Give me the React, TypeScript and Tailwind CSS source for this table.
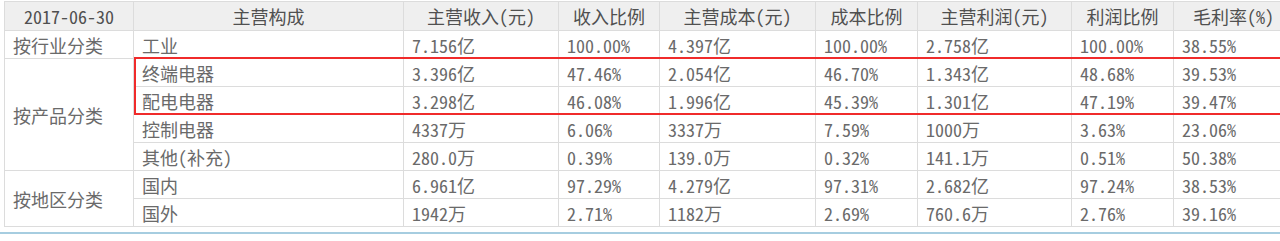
import React from "react";

type Row = { cat?: string; span?: number; cells: string[] };

const header = ["2017-06-30", "主营构成", "主营收入(元)", "收入比例", "主营成本(元)", "成本比例", "主营利润(元)", "利润比例", "毛利率(%)"];
const widths = ["w-[129px]", "w-[270px]", "w-[155px]", "w-[101px]", "w-[156px]", "w-[102px]", "w-[154px]", "w-[102px]", "w-[120px]"];

const rows: Row[] = [
  { cat: "按行业分类", span: 1, cells: ["工业", "7.156亿", "100.00%", "4.397亿", "100.00%", "2.758亿", "100.00%", "38.55%"] },
  { cat: "按产品分类", span: 4, cells: ["终端电器", "3.396亿", "47.46%", "2.054亿", "46.70%", "1.343亿", "48.68%", "39.53%"] },
  { cells: ["配电电器", "3.298亿", "46.08%", "1.996亿", "45.39%", "1.301亿", "47.19%", "39.47%"] },
  { cells: ["控制电器", "4337万", "6.06%", "3337万", "7.59%", "1000万", "3.63%", "23.06%"] },
  { cells: ["其他(补充)", "280.0万", "0.39%", "139.0万", "0.32%", "141.1万", "0.51%", "50.38%"] },
  { cat: "按地区分类", span: 2, cells: ["国内", "6.961亿", "97.29%", "4.279亿", "97.31%", "2.682亿", "97.24%", "38.53%"] },
  { cells: ["国外", "1942万", "2.71%", "1182万", "2.69%", "760.6万", "2.76%", "39.16%"] },
];

export default function App() {
  return (
    <div
      className="relative w-[1280px] h-[241px] overflow-hidden bg-white"
      style={{ fontFamily: '"Noto Sans Mono CJK SC", "Noto Sans CJK SC", sans-serif' }}
    >
      <div className="pt-px pl-[4px]">
        <table className="border-collapse table-fixed w-[1289px] text-[18px] text-[#6a6a6a] font-light">
          <colgroup>
            {widths.map((w, i) => (
              <col key={i} className={w} />
            ))}
          </colgroup>
          <thead>
            <tr className="bg-[#efefef]">
              {header.map((h, i) => (
                <th key={i} className="h-[29px] border border-[#dcdcdc] text-center font-medium text-[#505050] p-0 leading-none">
                  {h}
                </th>
              ))}
            </tr>
          </thead>
          <tbody>
            {rows.map((r, ri) => (
              <tr key={ri}>
                {r.cat && (
                  <td rowSpan={r.span} className="border border-[#dcdcdc] px-[8px] p-0 leading-none whitespace-nowrap">
                    {r.cat}
                  </td>
                )}
                {r.cells.map((c, ci) => (
                  <td key={ci} className="h-[28px] border border-[#dcdcdc] pl-[8px] p-0 leading-none whitespace-nowrap">
                    {c}
                  </td>
                ))}
              </tr>
            ))}
          </tbody>
        </table>
      </div>
      <div className="mt-[5px] h-[2px] bg-[#a6cde0]" />
      <div className="absolute left-[134px] top-[57px] w-[1160px] h-[58px] border-2 border-[#f02b2b] pointer-events-none" />
    </div>
  );
}
